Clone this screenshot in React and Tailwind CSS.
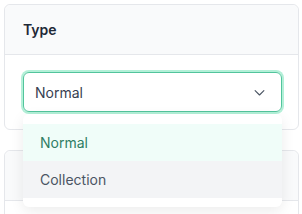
import React, { useState } from 'react';

const font = { fontFamily: 'Inter, "Noto Sans", sans-serif' };

const Chevron = () => (
  <svg width="15" height="15" viewBox="0 0 24 24" fill="none" stroke="#4b5563" strokeWidth="1.8" strokeLinecap="round" strokeLinejoin="round">
    <path d="m5 9 7 7 7-7" />
  </svg>
);

const App = () => {
  const [value, setValue] = useState('Normal');
  const options = ['Normal', 'Collection'];

  return (
    <div className="relative w-[302px] h-[214px] overflow-hidden bg-white px-[4px] pt-[4px]" style={font}>
      {/* Type card */}
      <div className="w-[295px] rounded-md border border-gray-200 bg-white">
        <div className="h-[50px] flex items-center px-[18px] bg-[#f9fafb] border-b border-gray-200 rounded-t-md">
          <span className="text-[14px] font-semibold text-[#1f2937]">Type</span>
        </div>
        <div className="pl-[18px] pr-[16px] pt-[17px] pb-[17px]">
          <div className="h-[40px] flex items-center justify-between pl-[11px] pr-[14px] rounded-md border border-[#52c49c] ring-2 ring-[#b3f0d8]">
            <span className="text-[14px] text-[#374151]">{value}</span>
            <Chevron />
          </div>
        </div>
      </div>

      {/* next card, partly hidden */}
      <div className="mt-[20px] w-[295px] h-[80px] rounded-md border border-gray-200 bg-white">
        <div className="h-[50px] bg-[#f9fafb] border-b border-gray-200 rounded-t-md" />
      </div>

      {/* open dropdown */}
      <div className="absolute left-[23px] top-[114px] w-[259px] rounded-md bg-white pt-[10px] pb-[9px] shadow-[0_4px_14px_rgba(0,0,0,0.08)]">
        {options.map((o) => (
          <div
            key={o}
            onClick={() => setValue(o)}
            className={`h-[37px] flex items-center px-[17px] text-[14px] cursor-pointer ${
              o === value ? 'bg-[#f0fdf9] text-[#2f7d64]' : 'bg-[#f3f4f6] text-[#4b5563]'
            }`}
          >
            {o}
          </div>
        ))}
      </div>
    </div>
  );
};

export default App;
